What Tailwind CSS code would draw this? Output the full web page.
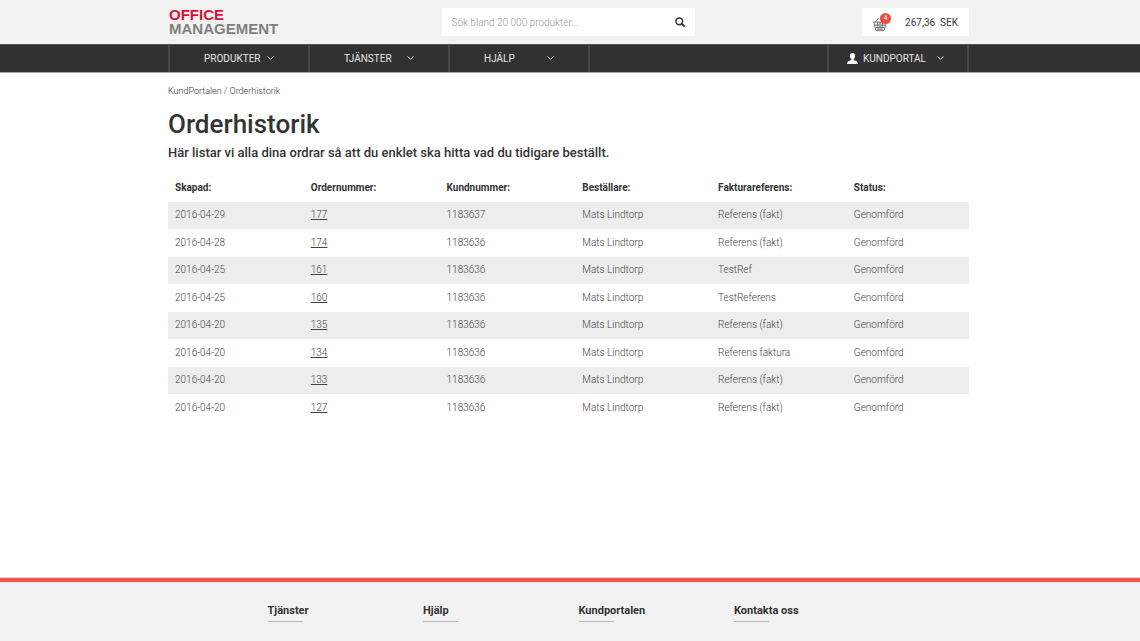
<!DOCTYPE html>
<html lang="sv">
<head>
<meta charset="utf-8">
<meta name="viewport" content="width=device-width, initial-scale=1">
<title>Orderhistorik</title>
<script src="https://cdn.jsdelivr.net/npm/@tailwindcss/browser@4"></script>
</head>
<body class="flex min-h-screen flex-col bg-white font-['Roboto','Liberation_Sans',sans-serif] text-[#333]">

<header class="bg-[#f2f2f2] pr-[3px]">
  <div class="mx-auto flex h-11 max-w-[801px] items-center justify-between">
    <a href="#" aria-label="Office Management" class="w-[273px] pl-px font-['Liberation_Sans',Arial,sans-serif] text-[15px] leading-[14px] font-bold text-[#808080]">
      <span class="block text-[#d9123a]">OFFICE</span>
      <span class="block">MANAGEMENT</span>
    </a>
    <form class="flex h-7 w-[253px] items-center bg-white pr-[10px] pl-[10px]">
      <input type="search" aria-label="Sök" placeholder="Sök bland 20 000 produkter..." class="min-w-0 flex-1 text-[10px] font-light outline-none placeholder:text-[#999]">
      <button type="button" aria-label="Sök">
        <svg class="size-[10px]" viewBox="0 0 11 11" fill="none" stroke="#333"><circle cx="4.7" cy="4.7" r="3.7" stroke-width="1.7"/><path d="M7.5 7.5 10 10" stroke-width="2" stroke-linecap="round"/></svg>
      </button>
    </form>
    <div class="flex w-[274px] justify-end">
      <a href="#" class="flex h-7 w-[107px] items-center justify-between bg-white pr-[11px] pl-[10px] text-[10px]">
        <span class="relative">
          <svg class="mt-[3px] h-[14px] w-4" viewBox="0 0 16 15" fill="none" stroke="#666" stroke-width="1"><path d="M.5 5.500h15M1.500 6l2 8.300h9l2-8.300M2.300 8.700h11.400M3 11.400h10M5.200 6l.8 8.300M8 5.500v8.800M10.800 6l-.8 8.300M3.300 5.500 6.500 1M12.700 5.500 9.500 1"/></svg>
          <span class="absolute -top-px left-[8px] flex size-[11px] items-center justify-center rounded-full bg-[#f04a3a] text-[7px] leading-none text-white">4</span>
        </span>
        <span class="whitespace-pre">267,36  SEK</span>
      </a>
    </div>
  </div>
</header>

<nav class="border-t border-b border-t-[#555] border-b-[#aaa] bg-[#313131] pr-[3px]">
  <div class="mx-auto flex h-[27px] max-w-[801px] justify-between text-[10px] text-[#e6e6e6]">
    <div class="flex">
      <button class="flex w-[140px] items-center justify-between border-l-2 border-[#484848] px-[34px] pb-px">PRODUKTER
        <svg class="h-1 w-[7px]" viewBox="0 0 7 4" fill="none" stroke="currentColor"><path d="m.5.5 3 2.700 3-2.700"/></svg></button>
      <button class="flex w-[140px] items-center justify-between border-l-2 border-[#484848] px-[34px] pb-px">TJÄNSTER
        <svg class="h-1 w-[7px]" viewBox="0 0 7 4" fill="none" stroke="currentColor"><path d="m.5.5 3 2.700 3-2.700"/></svg></button>
      <button class="flex w-[142px] items-center justify-between border-x-2 border-[#484848] px-[34px] pb-px">HJÄLP
        <svg class="h-1 w-[7px]" viewBox="0 0 7 4" fill="none" stroke="currentColor"><path d="m.5.5 3 2.700 3-2.700"/></svg></button>
    </div>
    <button class="flex w-[142px] items-center border-x-2 border-[#484848] pr-[23px] pb-px pl-[18px]">
      <svg class="mr-[5px] size-[11px]" viewBox="0 0 11 11" fill="#fff"><path d="M5.500 0C3.800 0 2.800 1.300 2.900 3.100c.1 1.500.7 2.500 1.400 3.100v.9C3 7.800.2 8 0 11h11c-.2-3-3-3.200-4.300-3.900v-.9c.7-.6 1.300-1.600 1.400-3.100C8.200 1.300 7.200 0 5.500 0Z"/></svg>
      <span class="mr-auto">KUNDPORTAL</span>
      <svg class="h-1 w-[7px]" viewBox="0 0 7 4" fill="none" stroke="currentColor"><path d="m.5.5 3 2.700 3-2.700"/></svg>
    </button>
  </div>
</nav>

<main class="grow pr-[3px] pb-6">
  <div class="mx-auto max-w-[801px]">
    <div class="pt-3 text-[9px] leading-3 font-light whitespace-pre"><a href="#">KundPortalen</a> / <a href="#">Orderhistorik</a></div>
    <h1 class="mt-[13px] text-[26px] leading-7 font-medium">Orderhistorik</h1>
    <h2 class="mt-[5px] text-[13px] leading-5 font-medium">Här listar vi alla dina ordrar så att du enklet ska hitta vad du tidigare beställt.</h2>
    <table class="mt-2.5 w-full table-fixed text-left text-[10px] [&_a]:underline [&_a]:decoration-1 [&_a]:underline-offset-1 [&_td]:px-[7px] [&_td]:pb-[2px] [&_th]:px-[7px] [&_th]:font-bold [&_tbody]:font-light [&_tbody]:text-[#444]">
      <colgroup><col class="w-[16.95%]"><col class="w-[16.95%]"><col class="w-[16.95%]"><col class="w-[16.95%]"><col class="w-[16.95%]"><col></colgroup>
      <thead><tr class="h-[29px]"><th scope="col">Skapad:</th><th scope="col">Ordernummer:</th><th scope="col">Kundnummer:</th><th scope="col">Beställare:</th><th scope="col">Fakturareferens:</th><th scope="col">Status:</th></tr></thead>
      <tbody>
        <tr class="h-[27px] bg-[#ededed]"><td>2016-04-29</td><td><a href="#">177</a></td><td>1183637</td><td>Mats Lindtorp</td><td>Referens (fakt)</td><td>Genomförd</td></tr>
        <tr class="h-7"><td>2016-04-28</td><td><a href="#">174</a></td><td>1183636</td><td>Mats Lindtorp</td><td>Referens (fakt)</td><td>Genomförd</td></tr>
        <tr class="h-[27px] bg-[#ededed]"><td>2016-04-25</td><td><a href="#">161</a></td><td>1183636</td><td>Mats Lindtorp</td><td>TestRef</td><td>Genomförd</td></tr>
        <tr class="h-7"><td>2016-04-25</td><td><a href="#">160</a></td><td>1183636</td><td>Mats Lindtorp</td><td>TestReferens</td><td>Genomförd</td></tr>
        <tr class="h-[27px] bg-[#ededed]"><td>2016-04-20</td><td><a href="#">135</a></td><td>1183636</td><td>Mats Lindtorp</td><td>Referens (fakt)</td><td>Genomförd</td></tr>
        <tr class="h-7"><td>2016-04-20</td><td><a href="#">134</a></td><td>1183636</td><td>Mats Lindtorp</td><td>Referens faktura</td><td>Genomförd</td></tr>
        <tr class="h-[27px] bg-[#ededed]"><td>2016-04-20</td><td><a href="#">133</a></td><td>1183636</td><td>Mats Lindtorp</td><td>Referens (fakt)</td><td>Genomförd</td></tr>
        <tr class="h-7"><td>2016-04-20</td><td><a href="#">127</a></td><td>1183636</td><td>Mats Lindtorp</td><td>Referens (fakt)</td><td>Genomförd</td></tr>
      </tbody>
    </table>
  </div>
</main>

<footer class="border-t border-[#ddd] bg-[#f2f2f2]">
  <div class="h-1 bg-[#ff5148]"></div>
  <div class="mx-auto grid max-w-[801px] grid-cols-4 pt-[21px] pr-[81px] pb-[19px] pl-[98px] text-[11px] leading-4 font-bold">
    <h3>Tjänster<span class="mt-[2px] block h-px w-[35px] bg-[#bbb]"></span></h3>
    <h3>Hjälp<span class="mt-[2px] block h-px w-[35px] bg-[#bbb]"></span></h3>
    <h3>Kundportalen<span class="mt-[2px] block h-px w-[35px] bg-[#bbb]"></span></h3>
    <h3>Kontakta oss<span class="mt-[2px] block h-px w-[35px] bg-[#bbb]"></span></h3>
  </div>
</footer>
</body>
</html>
